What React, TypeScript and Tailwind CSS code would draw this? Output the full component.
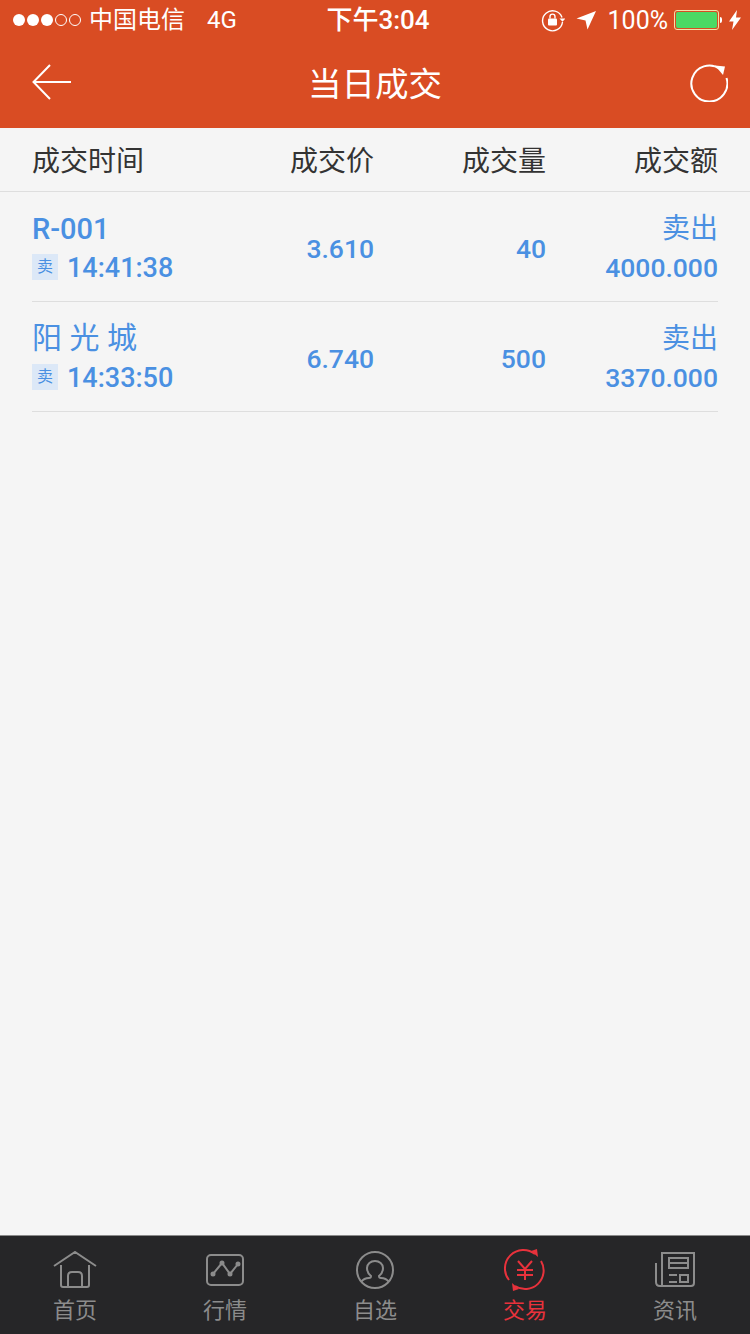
const cjk = "font-['Roboto','Noto_Sans_CJK_SC',sans-serif]";

const trades = [
  { name: "R-001", spaced: false, time: "14:41:38", price: "3.610", volume: "40", side: "卖出", amount: "4000.000" },
  { name: "阳 光 城", spaced: true, time: "14:33:50", price: "6.740", volume: "500", side: "卖出", amount: "3370.000" },
];

function StatusBar() {
  return (
    <div className="grid h-10 grid-cols-[1fr_auto_1fr] items-center text-white">
      <div className="ml-[13px] flex items-center">
        <div className="flex items-center gap-[2px]">
          <span className="size-3 rounded-full bg-white" />
          <span className="size-3 rounded-full bg-white" />
          <span className="size-3 rounded-full bg-white" />
          <span className="size-3 rounded-full border border-white" />
          <span className="size-3 rounded-full border border-white" />
        </div>
        <span className="ml-[8px] text-[24px] leading-none">中国电信</span>
        <span className="ml-[22px] text-[24px] leading-none">4G</span>
      </div>
      <div className="ml-[6px] text-[26px] leading-none font-medium whitespace-nowrap">下午3:04</div>
      <div className="mr-[9px] flex items-center justify-end">
        <svg width="24" height="24" viewBox="0 0 24 24" fill="none" className="mr-[11px]">
          <path d="M21 9.500A10 10 0 1 0 21.500 14" stroke="#fff" strokeWidth="1.400" />
          <path d="M18.500 10.500h6l-3 3.200z" fill="#fff" />
          <rect x="7" y="10.500" width="9" height="7" rx="1" fill="#fff" />
          <path d="M9 10.500V8.600a2.500 2.500 0 0 1 5 0v1.900" stroke="#fff" strokeWidth="1.400" />
        </svg>
        <svg width="20" height="20" viewBox="0 0 20 20" className="mr-[12px]">
          <path d="M20 1 11.500 19.500 9.500 10.500.5 8.500z" fill="#fff" />
        </svg>
        <span className="text-[25px] leading-none whitespace-nowrap">100%</span>
        <div className="ml-[6px] h-[20px] w-[45px] rounded-[3px] border border-[#f3e2a8] p-[1px]">
          <div className="h-full rounded-[2px] bg-[#4cd964]" />
        </div>
        <span className="ml-[1px] h-[6px] w-[2px] rounded-r-full bg-white" />
        <svg width="12" height="20" viewBox="0 0 12 20" className="ml-[7px]">
          <path d="M8 0 0 11.500h4.500L3 20l9-12.500H7z" fill="#fff" />
        </svg>
      </div>
    </div>
  );
}

function NavBar() {
  return (
    <div className="grid h-[88px] grid-cols-[1fr_auto_1fr] items-center text-white">
      <svg width="40" height="38" viewBox="0 0 40 38" fill="none" stroke="#fff" strokeWidth="2" className="mb-[4px] ml-8">
        <path d="M18 2 1.500 19 18 36M1.500 19H39" />
      </svg>
      <h1 className="mt-[2px] text-[33.500px] leading-none font-normal whitespace-nowrap">当日成交</h1>
      <svg width="38" height="38" viewBox="0 0 38 38" fill="none" className="mr-[22px] mb-[2px] justify-self-end">
        <path d="M30 5A18 18 0 1 0 36.500 14" stroke="#fff" strokeWidth="2" />
        <path d="M25 1.500 35 2.500 33 11z" fill="#fff" />
      </svg>
    </div>
  );
}

function TradeRow({ trade }: { trade: (typeof trades)[number] }) {
  return (
    <div className="mx-8 grid h-[110px] grid-cols-[170px_172px_172px_172px] items-center border-b border-[#dedede] pt-[6px] text-[#4a90e2]">
      <div>
        <div className={`h-[38px] ${trade.spaced ? "text-[30px] leading-[32px] font-normal" : "text-[29px] leading-[34px] font-medium"}`}>{trade.name}</div>
        <div className="flex h-[38px] items-center">
          <span className="mb-[3px] flex size-[26px] items-center justify-center bg-[#dce8f7] text-[16px] leading-none">卖</span>
          <span className="ml-[9px] text-[27px] leading-none font-medium whitespace-nowrap">{trade.time}</span>
        </div>
      </div>
      <div className="text-right text-[26.500px] leading-none font-medium">{trade.price}</div>
      <div className="text-right text-[26.500px] leading-none font-medium">{trade.volume}</div>
      <div className="text-right">
        <div className="h-10 text-[28px] leading-[36px]">{trade.side}</div>
        <div className="h-[38px] text-[26.500px] leading-[34px] font-medium">{trade.amount}</div>
      </div>
    </div>
  );
}

function HomeIcon() {
  return (
    <svg width="44" height="38" viewBox="0 0 44 38" fill="none" stroke="currentColor" strokeWidth="2">
      <path d="M1 15 22 1l21 14M8 14v20a2 2 0 0 0 2 2h24a2 2 0 0 0 2-2V14M15 36V25q0-4 4-4h6q4 0 4 4v11" />
    </svg>
  );
}

function ChartIcon() {
  return (
    <svg width="38" height="32" viewBox="0 0 38 32" fill="none" stroke="currentColor" strokeWidth="2">
      <rect x="1" y="1" width="36" height="30" rx="4" />
      <path d="M7 20 16 9l8 11 8-10" />
      <circle cx="7" cy="20" r="1.500" fill="currentColor" />
      <circle cx="16" cy="9" r="1.500" fill="currentColor" />
      <circle cx="24" cy="20" r="1.500" fill="currentColor" />
      <circle cx="32" cy="10" r="1.500" fill="currentColor" />
    </svg>
  );
}

function WatchIcon() {
  return (
    <svg width="38" height="38" viewBox="0 0 38 38" fill="none" stroke="currentColor" strokeWidth="2">
      <circle cx="19" cy="19" r="18" />
      <path d="M5 31q3-4 8-4 2 0 2-2-4-3-4-8a8 7 0 0 1 16 0q0 5-4 8 0 2 2 2 5 0 8 4" />
    </svg>
  );
}

function TradeIcon() {
  return (
    <svg width="40" height="40" viewBox="0 0 40 40" fill="none" stroke="currentColor" strokeWidth="2" className="overflow-visible">
      <path d="M4 30A18.500 18.500 0 0 1 30 4" />
      <path d="M36 11A18.500 18.500 0 0 1 10 36" />
      <path d="M26 1 32-1l1 8z" fill="currentColor" stroke="none" />
      <path d="M14 39 8 41 7 33z" fill="currentColor" stroke="none" />
      <path d="M13 11l7 8 7-8M12 20h16M12 25h16M20 19v11" />
    </svg>
  );
}

function NewsIcon() {
  return (
    <svg width="40" height="36" viewBox="0 0 40 36" fill="none" stroke="currentColor" strokeWidth="2">
      <path d="M7 34V1h32v30q0 3-3 3H5q-4 0-4-4V11" />
      <path d="M14 6h19v10H14zM14 11h19M14 23h8M14 30h8" />
      <rect x="25" y="23" width="8" height="7" />
    </svg>
  );
}

const tabs = [
  { label: "首页", icon: <HomeIcon />, active: false },
  { label: "行情", icon: <ChartIcon />, active: false },
  { label: "自选", icon: <WatchIcon />, active: false },
  { label: "交易", icon: <TradeIcon />, active: true },
  { label: "资讯", icon: <NewsIcon />, active: false },
];

function TabBar() {
  return (
    <div className="flex h-[99px] shrink-0 border-t border-[#8a8a8a] bg-[#262628]">
      {tabs.map((tab) => (
        <div key={tab.label} className={`flex flex-1 flex-col items-center ${tab.active ? "text-[#e8323c]" : "text-[#8c8c8c]"}`}>
          <div className="flex h-[60px] items-center justify-center pt-[8px]">{tab.icon}</div>
          <span className="mt-[1px] text-[22px] leading-[28px]">{tab.label}</span>
        </div>
      ))}
    </div>
  );
}

export default function App() {
  return (
    <div className={`flex h-[1334px] w-[750px] flex-col overflow-hidden bg-[#f5f5f5] ${cjk}`}>
      <div className="bg-[#d94c23]">
        <StatusBar />
        <NavBar />
      </div>
      <div className="grid h-16 grid-cols-[170px_172px_172px_172px] items-center border-b border-[#dedede] px-8 pt-[4px] text-[28px] leading-none text-[#333333]">
        <div className="whitespace-nowrap">成交时间</div>
        <div className="text-right">成交价</div>
        <div className="text-right">成交量</div>
        <div className="text-right">成交额</div>
      </div>
      <div className="flex-1">
        {trades.map((trade) => (
          <TradeRow key={trade.time} trade={trade} />
        ))}
      </div>
      <TabBar />
    </div>
  );
}
